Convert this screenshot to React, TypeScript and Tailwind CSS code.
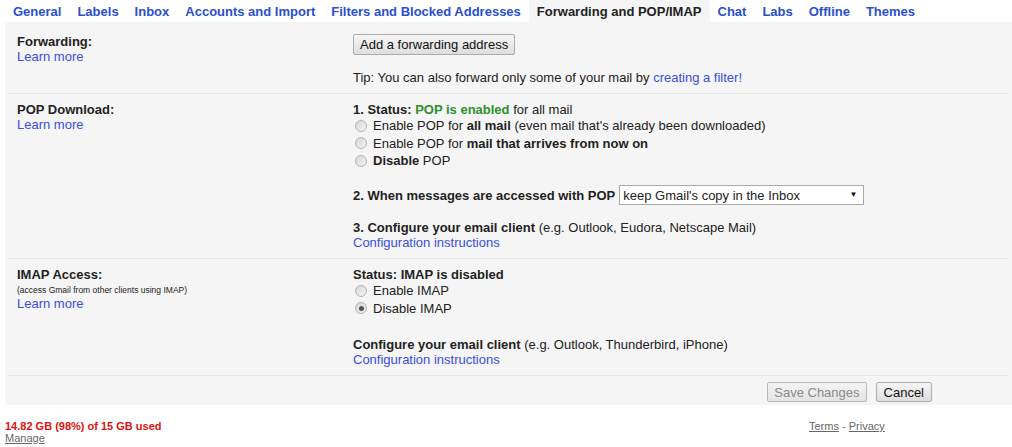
import React from "react";

const tabs = [
  "General",
  "Labels",
  "Inbox",
  "Accounts and Import",
  "Filters and Blocked Addresses",
  "Forwarding and POP/IMAP",
  "Chat",
  "Labs",
  "Offline",
  "Themes",
];

function Radio({ checked }: { checked?: boolean }) {
  return (
    <span className="mr-[6px] ml-[2px] flex h-[12px] w-[12px] shrink-0 items-center justify-center rounded-full border border-[#b4b4b4] bg-gradient-to-br from-[#d6d6d6] to-[#f4f4f4]">
      {checked ? <span className="h-[5px] w-[5px] rounded-full bg-[#555]" /> : null}
    </span>
  );
}

function RadioRow({ children, checked }: { children: React.ReactNode; checked?: boolean }) {
  return (
    <div className="flex h-[17.5px] items-center">
      <Radio checked={checked} />
      <span>{children}</span>
    </div>
  );
}

function Link({ children }: { children: React.ReactNode }) {
  return <span className="text-[#3a4fd8]">{children}</span>;
}

function Sep() {
  return <div className="mx-[3px] h-px bg-[#e6e6e6]" />;
}

export default function App() {
  return (
    <div className="h-[447px] w-[1012px] overflow-hidden bg-white font-['Liberation_Sans',Arial,sans-serif] text-[13px] leading-[15px] text-[#222]">
      {/* Tabs */}
      <div className="flex h-[22px] pl-[5px]">
        {tabs.map((t) => {
          const active = t === "Forwarding and POP/IMAP";
          return (
            <div
              key={t}
              className={
                active
                  ? "bg-[#f5f5f5] px-2 pt-[4px] font-bold text-[#222]"
                  : "px-2 pt-[4px] font-bold text-[#2a4fcf]"
              }
            >
              {t}
            </div>
          );
        })}
      </div>

      {/* Panel */}
      <div className="ml-[5px] bg-[#f5f5f5]">
        {/* Forwarding */}
        <div className="flex pt-[12px] pb-[8px] pl-[12px]">
          <div className="w-[336px] shrink-0">
            <div className="font-bold">Forwarding:</div>
            <Link>Learn more</Link>
          </div>
          <div>
            <button className="h-[21px] rounded-[2px] border border-[#acacac] bg-gradient-to-b from-[#f6f6f6] to-[#dedede] px-[6px] text-[13px] leading-[15px] text-[#111]">
              Add a forwarding address
            </button>
            <div className="mt-[15px]">
              Tip: You can also forward only some of your mail by <Link>creating a filter!</Link>
            </div>
          </div>
        </div>
        <Sep />

        {/* POP */}
        <div className="flex pt-[8px] pb-[8px] pl-[12px]">
          <div className="w-[336px] shrink-0">
            <div className="font-bold">POP Download:</div>
            <Link>Learn more</Link>
          </div>
          <div>
            <div>
              <span className="font-bold">1. Status: </span>
              <span className="font-bold text-[#2f8f2f]">POP is enabled</span> for all mail
            </div>
            <RadioRow>
              Enable POP for <b>all mail</b> (even mail that's already been downloaded)
            </RadioRow>
            <RadioRow>
              Enable POP for <b>mail that arrives from now on</b>
            </RadioRow>
            <RadioRow>
              <b>Disable</b> POP
            </RadioRow>
            <div className="mt-[15.5px] flex h-[20px] items-center">
              <span className="font-bold">2. When messages are accessed with POP</span>
              <div className="ml-[4px] flex h-[20px] w-[245px] items-center justify-between border border-[#a9a9a9] bg-white pr-[6px] pl-[3px]">
                <span>keep Gmail's copy in the Inbox</span>
                <span className="text-[8px] leading-none text-[#111]">▼</span>
              </div>
            </div>
            <div className="mt-[15px]">
              <span className="font-bold">3. Configure your email client</span> (e.g. Outlook, Eudora, Netscape Mail)
            </div>
            <Link>Configuration instructions</Link>
          </div>
        </div>
        <Sep />

        {/* IMAP */}
        <div className="flex pt-[8px] pb-[8px] pl-[12px]">
          <div className="w-[336px] shrink-0">
            <div className="font-bold">IMAP Access:</div>
            <div className="mt-[2px] text-[8.5px] leading-[12px]">(access Gmail from other clients using IMAP)</div>
            <Link>Learn more</Link>
          </div>
          <div>
            <div className="font-bold">Status: IMAP is disabled</div>
            <RadioRow>Enable IMAP</RadioRow>
            <RadioRow checked>Disable IMAP</RadioRow>
            <div className="mt-[20px]">
              <span className="font-bold">Configure your email client</span> (e.g. Outlook, Thunderbird, iPhone)
            </div>
            <Link>Configuration instructions</Link>
          </div>
        </div>
        <Sep />

        {/* Actions */}
        <div className="flex justify-end gap-[9px] pt-[6px] pr-[80px] pb-[3px]">
          <button className="h-[20px] rounded-[2px] border border-[#b8b8b8] bg-gradient-to-b from-[#f4f4f4] to-[#e4e4e4] px-[6px] text-[13px] leading-[15px] text-[#8a8a8a]">
            Save Changes
          </button>
          <button className="h-[20px] rounded-[2px] border border-[#acacac] bg-gradient-to-b from-[#f6f6f6] to-[#dedede] px-[7px] text-[13px] leading-[15px] text-[#111]">
            Cancel
          </button>
        </div>
      </div>

      {/* Footer */}
      <div className="mt-[15px] flex pl-[5px] text-[11px] leading-[12px]">
        <div className="w-[804px] shrink-0">
          <div className="font-bold text-[#dd1111]">14.82 GB (98%) of 15 GB used</div>
          <div className="text-[#666] underline">Manage</div>
        </div>
        <div className="text-[#666]">
          <span className="underline">Terms</span> - <span className="underline">Privacy</span>
        </div>
      </div>
    </div>
  );
}
